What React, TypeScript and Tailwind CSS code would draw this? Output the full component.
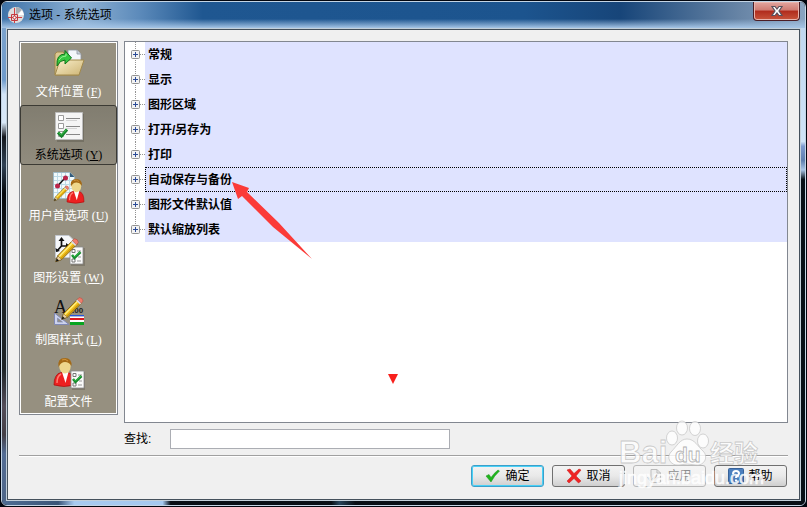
import React, { useState } from "react";

const categories = [
  { label: "文件位置", hotkey: "F", icon: FolderIcon },
  { label: "系统选项", hotkey: "Y", icon: ChecklistIcon },
  { label: "用户首选项", hotkey: "U", icon: UserPrefsIcon },
  { label: "图形设置", hotkey: "W", icon: DrawingSettingsIcon },
  { label: "制图样式", hotkey: "L", icon: DraftingStyleIcon },
  { label: "配置文件", hotkey: "", icon: ProfileIcon },
];

const sections = [
  "常规",
  "显示",
  "图形区域",
  "打开/另存为",
  "打印",
  "自动保存与备份",
  "图形文件默认值",
  "默认缩放列表",
];

/* ---------- small drawing parts shared by the sidebar icons ---------- */

function Pencil() {
  return (
    <g>
      <path d="M2 28 4 21.5 20.5 4.5 25 9 8.500 25.500Z" fill="#f2c21b" stroke="#6b4b05" strokeWidth=".8" />
      <path d="M5.500 22.500 21 6.500" stroke="#fff08a" strokeWidth="1.500" />
      <path d="M7.500 24.500 24 8" stroke="#b98208" strokeWidth="1" />
      <path d="M2 28 4 21.500 8.500 25.500Z" fill="#ecd2a0" stroke="#5a4416" strokeWidth=".5" />
      <path d="M2 28 3 24.500 5.500 26.700Z" fill="#111" />
      <path d="M18.500 6.500 20.500 4.500 25 9 23 11Z" fill="#d9d9e2" />
      <path d="M20 5 22 3Q26 3 26.500 7L24.500 9.500Z" fill="#ef7d6d" stroke="#a83c30" strokeWidth=".5" />
    </g>
  );
}

function Person() {
  return (
    <g>
      <path d="M0 27Q0 16 7 14.500H14Q20 16 20 27Q10 30 0 27Z" fill="#ed2020" stroke="#a80d0d" strokeWidth=".7" />
      <path d="M3 25Q3 18 7 16" stroke="#ff7b6f" strokeWidth="1.500" fill="none" />
      <path d="M8 14 11.500 25 14.500 14Z" fill="#fff" />
      <ellipse cx="11" cy="8.500" rx="5.700" ry="7" fill="#eed68b" />
      <path d="M4.500 9Q3 0 11 0Q18 0 17.500 8Q15 4 11 4Q7 4 4.500 9Z" fill="#a46a16" />
      <path d="M8 2Q11 0 14 3" stroke="#d2943b" fill="none" />
    </g>
  );
}

function MiniList() {
  return (
    <g>
      <path d="M1 1H15V19H1Z" fill="#6f6b5e" opacity=".6" />
      <path d="M0 0H13V17H0Z" fill="#fafafa" stroke="#8a8a8a" strokeWidth=".8" />
      <path d="M2 2.500H5V5.500H2ZM2 12H5V15H2Z" fill="#fff" stroke="#777" />
      <path d="M7 4H11M8 10H11M7 14H11" stroke="#999" />
      <path d="M2 8 4.500 11 10.500 5" fill="none" stroke="#13882a" strokeWidth="2.500" />
      <path d="M2.500 8 4.500 10 10 5" fill="none" stroke="#36c14d" />
    </g>
  );
}

function FolderIcon() {
  return (
    <svg width="32" height="32" viewBox="0 0 32 32">
      <defs>
        <linearGradient id="folder" x1="0" y1="0" x2="1" y2="1">
          <stop offset="0" stopColor="#f9efcb" />
          <stop offset="1" stopColor="#cdb474" />
        </linearGradient>
      </defs>
      <path d="M2 27V6L4 4H10L12 6H26V27Z" fill="#dcc892" stroke="#a28a4d" />
      <path d="M15 2H24L28 6V15H15Z" fill="#f4f6fa" stroke="#8d94a0" strokeWidth=".8" />
      <path d="M24 2V6H28" fill="#ccd2dc" stroke="#8d94a0" strokeWidth=".8" />
      <path d="M7 12H31L26 27H2Z" fill="url(#folder)" stroke="#a28a4d" />
      <path d="M4 18Q3 6 12 6V2.500L18.500 10 12 16V12Q7 12 4 18Z" fill="#35c840" stroke="#0e7419" />
      <path d="M6 12Q8 8 13 8V5.500" fill="none" stroke="#98f294" />
    </svg>
  );
}

function ChecklistIcon() {
  return (
    <svg width="32" height="32" viewBox="0 0 32 32">
      <path d="M4 3H31V31H4Z" fill="#5f5c50" opacity=".5" />
      <path d="M2.500 1.500H29.500V28.500H2.500Z" fill="#f5f5f5" stroke="#bcbcbc" />
      <path d="M5.500 4.500H10.500V9.500H5.500ZM5.500 12.500H10.500V17.500H5.500ZM5.500 20.500H10.500V25.500H5.500Z" fill="#fff" stroke="#9b9b9b" />
      <path d="M13 7.500H27M13 15.500H27M13 23.500H27" stroke="#888" />
      <path d="M13 9.500H24M13 17.500H24" stroke="#d4d4d4" />
      <path d="M5 21.500 8.500 25 14 18.500" fill="none" stroke="#15832a" strokeWidth="3" />
      <path d="M5.500 21.500 8.500 24 13.500 18.500" fill="none" stroke="#3cc14c" />
    </svg>
  );
}

function UserPrefsIcon() {
  return (
    <svg width="32" height="32" viewBox="0 0 32 32">
      <path d="M.5.500H17L21.500 5V26.500H.500Z" fill="#f2fafc" stroke="#a0bbc8" />
      <path d="M4.500 1V26M8.500 1V26M12.500 1V26M16.500 1V26M1 4.500H21M1 8.500H21M1 12.500H21M1 16.500H21M1 20.500H21" stroke="#bddbe7" />
      <path d="M17 .500V5H21.500Z" fill="#315b7d" />
      <path d="M5 13.500 12 6" stroke="#111" strokeWidth="1.500" />
      <circle cx="4.500" cy="14" r="2.500" fill="#b9254b" />
      <circle cx="12.500" cy="6" r="2.500" fill="#b9254b" />
      <g transform="translate(0 12) scale(.6)"><Pencil /></g>
      <g transform="translate(14 7) scale(.85)"><Person /></g>
    </svg>
  );
}

function DrawingSettingsIcon() {
  return (
    <svg width="32" height="32" viewBox="0 0 32 32">
      <path d="M2.500 1.500H16L20.500 6V23.500H2.500Z" fill="#f5f7fa" stroke="#c2c7cf" />
      <path d="M8.500 5V12L4 17M8.500 12H16" stroke="#111" strokeWidth="1.700" fill="none" />
      <path d="M5.500 7 8.500 3 11.500 7ZM13 9 17 12 13 15ZM2.500 14 3 18 7 17Z" fill="#111" />
      <g transform="translate(17 13)"><MiniList /></g>
      <g transform="translate(1 2) scale(.92)"><Pencil /></g>
    </svg>
  );
}

function DraftingStyleIcon() {
  return (
    <svg width="32" height="32" viewBox="0 0 32 32" className="overflow-visible">
      <text x="1" y="17" fontSize="18" fontFamily="Liberation Serif, serif" fill="#111">A</text>
      <text x="19" y="17" fontSize="8" fontWeight="bold" fontFamily="Liberation Sans, sans-serif" fill="#222">.00</text>
      <path d="M1.500 17V28.500H16Z" fill="#cdd3ed" stroke="#8089b5" />
      <path d="M4.500 22V26H9.500Z" fill="#969080" stroke="#8089b5" strokeWidth=".7" />
      <path d="M17 19H31V20.500H17Z" fill="#2456dc" />
      <path d="M17 20.500H31V22H17Z" fill="#fff" />
      <path d="M17 22H31V24H17Z" fill="#d9181d" />
      <path d="M17 24H31V26H17Z" fill="#fff" />
      <path d="M17 26H31V29H17Z" fill="#08a520" />
      <g transform="translate(7 -1) scale(.87)"><Pencil /></g>
    </svg>
  );
}

function ProfileIcon() {
  return (
    <svg width="32" height="32" viewBox="0 0 32 32">
      <g transform="translate(1 0)"><Person /></g>
      <g transform="translate(18 13)"><MiniList /></g>
    </svg>
  );
}

function AppIcon() {
  return (
    <svg width="16" height="16" viewBox="0 0 16 16">
      <circle cx="8" cy="8" r="8" fill="#dedddd" />
      <path d="M8 8V0A8 8 0 0 1 14 3Z" fill="#a9adb2" />
      <path d="M10 8 14 3 16 8Z" fill="#fff" />
      <path d="M6.500 1V16M0 10.500H14" stroke="#d33f42" />
      <path d="M3.500 7.500H9.500V13.500H3.500Z" fill="none" stroke="#c4383c" />
      <circle cx="6.500" cy="10.500" r="1.500" fill="#fff" stroke="#c4383c" />
    </svg>
  );
}

/* ---------- tree ---------- */

function Expander({ last }: { last: boolean }) {
  return (
    <svg width="20" height="25" viewBox="0 0 20 25">
      <path d={last ? "M10.500 0V12" : "M10.500 0V25"} stroke="#949494" strokeDasharray="1 1" />
      <path d="M15 12.500H20" stroke="#949494" strokeDasharray="1 1" />
      <rect x="6.500" y="8.500" width="8" height="8" rx="1" fill="#f2f2f2" stroke="#929292" />
      <path d="M8 12.500H13M10.500 10V15" stroke="#2b4b97" />
    </svg>
  );
}

function SectionTree() {
  const [focused, setFocused] = useState(5);
  return (
    <ul>
      {sections.map((name, i) => (
        <li key={name}>
          <button onClick={() => setFocused(i)} className="flex h-[25px] w-full text-left outline-none">
            <Expander last={i === sections.length - 1} />
            <span
              className={
                "flex h-full flex-1 items-center border border-dotted bg-[#dfe3ff] pl-[2px] text-xs font-bold text-black " +
                (i === focused ? "border-black" : "border-[#dfe3ff]")
              }
            >
              {name}
            </span>
          </button>
        </li>
      ))}
    </ul>
  );
}

function Sidebar() {
  const [active, setActive] = useState(1);
  return (
    <nav className="flex w-[99px] shrink-0 flex-col self-start border border-[#828790] bg-white p-px">
      <div className="flex flex-col gap-[2px] bg-[#969080]">
        {categories.map((c, i) => {
          const Icon = c.icon;
          const on = i === active;
          return (
            <button
              key={c.label}
              onClick={() => setActive(i)}
              className={
                "flex h-[60px] flex-col items-center pt-[5px] " +
                (on
                  ? "-mx-px rounded-[3px] border border-[#3b3a34] bg-linear-to-b from-[#817d70] to-[#918c7e] text-black"
                  : "text-white")
              }
            >
              <Icon />
              <span className="mt-1 text-xs leading-4 whitespace-nowrap">
                {c.label}
                {c.hotkey && (
                  <span className="ml-[3px] font-['Liberation_Serif',serif]">
                    (<u>{c.hotkey}</u>)
                  </span>
                )}
              </span>
            </button>
          );
        })}
      </div>
    </nav>
  );
}

/* ---------- dialog buttons ---------- */

function DialogButton(props: { label: string; look?: string; disabled?: boolean; children: React.ReactNode }) {
  const look = props.look ?? "border-[#707070] text-black";
  return (
    <button
      disabled={props.disabled}
      className={
        "flex h-[22px] w-[73px] items-center justify-center gap-1 rounded-[3px] border bg-linear-to-b from-[#f3f3f3] via-[#e9e9e9] to-[#cfcfcf] text-xs " +
        look
      }
    >
      <svg width="16" height="16" viewBox="0 0 16 16">
        {props.children}
      </svg>
      {props.label}
    </button>
  );
}

function Watermark() {
  return (
    <svg
      width="150"
      height="76"
      viewBox="0 0 150 76"
      className="pointer-events-none absolute right-[33px] bottom-[4px]"
      fill="#fff"
      fillOpacity=".8"
      stroke="#bdbdbd"
      strokeOpacity=".8"
      strokeWidth=".8"
    >
      <text x="2" y="43" fontSize="31" fontWeight="bold" fontFamily="Liberation Sans, sans-serif">Bai</text>
      <ellipse cx="55" cy="18" rx="5.500" ry="7" />
      <ellipse cx="65" cy="8" rx="5.500" ry="7" />
      <ellipse cx="78" cy="8.500" rx="5.500" ry="7" />
      <ellipse cx="86" cy="21" rx="5.500" ry="7" />
      <path d="M70 19C78 19 81 27 86 31C92 37 87 46 79 45Q70 43 62 45C53 46 49 37 54 32C60 26 63 19 70 19Z" />
      <text x="58" y="42" fontSize="21" fontWeight="bold" fontFamily="Liberation Sans, sans-serif" stroke="#b0b0b0" strokeOpacity="1">du</text>
      <text x="93" y="42" fontSize="24" fontWeight="bold" fontFamily="Noto Sans CJK SC, sans-serif">经验</text>
      <text x="2" y="64" fontSize="18" fontFamily="Liberation Sans, sans-serif" stroke="#fff" strokeWidth=".6">jingyan.baidu.com</text>
    </svg>
  );
}

export default function App() {
  return (
    <div className="flex min-h-screen flex-col bg-[#02060f] p-px font-['Liberation_Sans','Noto_Sans_CJK_SC',sans-serif]">
      <div className="flex flex-1 flex-col overflow-hidden rounded-[6px] border border-[#c3d4e4]">
        <header className="flex h-[26px] shrink-0 items-start bg-[linear-gradient(to_bottom,transparent_65%,#a5c5e6_100%),linear-gradient(to_right,#3f73a9_0%,#8eb1d3_10%,#5d8bbb_17%,#1f5791_25%,#1c548e_65%,#174579_77%,#6885a6_92%,#8aa4c1_100%)]">
          <div className="flex h-[26px] flex-1 items-center gap-[5px] pl-[6px]">
            <AppIcon />
            <h1 className="text-xs text-black">选项 - 系统选项</h1>
          </div>
          <button
            aria-label="关闭"
            className="mr-[5px] flex h-[19px] w-[47px] items-center justify-center rounded-b-[4px] border border-t-0 border-[#4b1d25] bg-[linear-gradient(#e3a69f_0%,#cf7b72_45%,#b02b1c_50%,#c8553c_100%)] shadow-[inset_0_0_0_1px_#e8b5ae]"
          >
            <svg width="14" height="12" viewBox="0 0 14 12">
              <path d="M2 1.500H5L7 4 9 1.500H12L9 6 12 10.500H9L7 8 5 10.500H2L5 6Z" fill="#fff" stroke="#59515c" strokeWidth="1.200" />
            </svg>
          </button>
        </header>

        <div className="flex flex-1">
          <div className="w-1 shrink-0 bg-[linear-gradient(#7ba2cc_0%,#6f9bcb_11%,#d3e5f8_14%,#d8e8f8_20%,#14171d_23%,#304154_29%,#05080c_35%,#1c2327_52%,#1c2327_72%,#534d59_80%,#443f46_86%,#536c94_90%,#4f6789_100%)]" />
          <main className="relative flex min-w-0 flex-1 flex-col border border-[#c3d0da]">
            <div className="flex flex-1 flex-col border border-[#45515c] bg-[#f0f0f0] px-[11px] pt-[11px] pb-3">
              <div className="flex flex-1 gap-[6px]">
                <Sidebar />
                <section className="relative min-w-0 flex-1 border border-[#828790] bg-white">
                  <SectionTree />
                  {/* pointer to the auto-save section */}
                  <svg width="82" height="79" viewBox="0 0 82 79" className="pointer-events-none absolute top-[139px] left-[106px]">
                    <path d="M1 1 18 7 16 11 48 42 81 78 42 46 11 15 7 18Z" fill="#fb3b38" />
                  </svg>
                  <svg width="12" height="12" viewBox="0 0 12 12" className="pointer-events-none absolute top-[331px] left-[262px]">
                    <path d="M1 1H11L6 11Z" fill="#f8201c" />
                  </svg>
                </section>
              </div>

              <div className="mt-[6px] flex items-center pl-[105px] text-xs text-black">
                <label htmlFor="find" className="w-[46px]">查找:</label>
                <input id="find" type="text" className="h-5 w-[280px] border border-[#abadb3] bg-white px-1 outline-none" />
              </div>

              <hr className="mt-[6px] h-[2px] border-t border-b border-t-[#a0a0a0] border-b-white" />

              <div className="mt-2 flex justify-end gap-2 pr-px">
                <DialogButton label="确定" look="border-[#3c9fc9] text-black shadow-[inset_0_0_0_1px_#48d1f7]">
                  <path d="M1 8 4 6.500 6 9.500Q9 5 13 2L14.500 3Q9 8 6 14Z" fill="#20b51c" stroke="#16921a" strokeWidth=".5" />
                </DialogButton>
                <DialogButton label="取消">
                  <path d="M1 2 4 1 8 5.500 13 1 15 2 10 8 15 13 12.500 15 8 10.500 3 15 1 13 6 8Z" fill="#ef2424" stroke="#c71616" strokeWidth=".5" />
                </DialogButton>
                <DialogButton label="应用" disabled look="border-[#b8b8b8] text-[#8e8e8e] from-[#f4f4f4] via-[#f2f2f2] to-[#eeeeee]">
                  <path d="M4 1.500H10L13.500 5V14.500H4Z" fill="#eee" stroke="#bbb" />
                  <path d="M10 1.500V5H13.500" fill="none" stroke="#bbb" />
                  <path d="M1 9 4 13 10 7" fill="none" stroke="#b0b0b0" strokeWidth="2" />
                </DialogButton>
                <DialogButton label="帮助">
                  <rect x=".5" y=".5" width="15" height="15" rx="1" fill="#4c7fbe" stroke="#386299" />
                  <path d="M5 6Q5 3 8 3Q11 3 11 5.500Q11 7 9 8Q8 8.500 8 10" fill="none" stroke="#fff" strokeWidth="2" />
                  <path d="M7 11.500H9V13.500H7Z" fill="#fff" />
                </DialogButton>
              </div>
            </div>
            <Watermark />
          </main>
          <div className="w-1 shrink-0 bg-[linear-gradient(#c0d7ef_0%,#cfe4f7_24%,#7d9acf_25%,#5f7fae_28%,#a9c5e6_30%,#071017_32%,#071017_100%)]" />
        </div>
        <div className="h-1 shrink-0 bg-[linear-gradient(to_right,#4f6d93_0%,#3a5578_7%,#a8caef_9%,#a5c9ef_20%,#080e15_21%,#080e15_41%,#28445a_42%,#080e15_44%,#080e15_100%)]" />
      </div>
    </div>
  );
}
